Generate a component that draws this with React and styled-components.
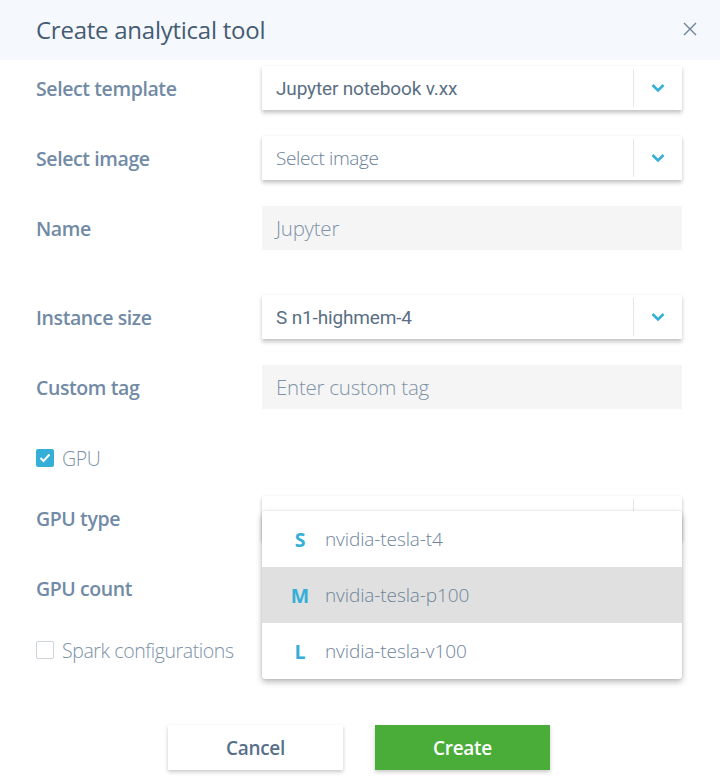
import styled, { createGlobalStyle } from 'styled-components';

const GlobalStyle = createGlobalStyle`
  body {
    margin: 0;
    background: #fff;
    font-family: 'Open Sans', sans-serif;
  }
`;

const Dialog = styled.div`
  width: 720px;
  height: 782px;
  background: #fff;
  overflow: hidden;
`;

const Header = styled.div`
  height: 60px;
  background: #f5f8fc;
  display: flex;
  align-items: center;
  justify-content: space-between;
  padding: 0 20px 2px 36px;
  box-sizing: border-box;
`;

const Title = styled.h2`
  margin: 0;
  font-size: 24px;
  font-weight: 400;
  color: #455c73;
  letter-spacing: -0.25px;
`;

const CloseButton = styled.button`
  border: none;
  background: none;
  padding: 0;
  width: 20px;
  height: 20px;
  display: flex;
  align-items: center;
  justify-content: center;
  cursor: pointer;
`;

const Body = styled.div`
  padding: 6px 38px 0 36px;
`;

const Row = styled.div`
  position: relative;
  display: flex;
  align-items: center;
  height: 44px;
  margin-bottom: ${({ $gap }) => $gap ?? 26}px;
`;

const Label = styled.div`
  width: 226px;
  flex-shrink: 0;
  padding-top: 1px;
  font-size: 19.5px;
  font-weight: 600;
  color: #718aa5;
  letter-spacing: -0.4px;
`;

const SelectBox = styled.div`
  flex: 1;
  height: 44px;
  display: flex;
  align-items: stretch;
  background: #fff;
  box-shadow: 0 3px 4px rgba(0, 0, 0, 0.22), 0 0 2px rgba(0, 0, 0, 0.06);
`;

const SelectValue = styled.div`
  flex: 1;
  display: flex;
  align-items: center;
  padding-left: 14px;
  font-size: 19px;
  font-family: ${({ $placeholder }) =>
    $placeholder ? "'Open Sans', sans-serif" : "'Roboto', 'Liberation Sans', sans-serif"};
  font-weight: ${({ $placeholder }) => ($placeholder ? 300 : 400)};
  color: ${({ $placeholder }) => ($placeholder ? '#6a8199' : '#5a6f84')};
  letter-spacing: ${({ $placeholder }) => ($placeholder ? '-0.4px' : '-0.15px')};
`;

const Caret = styled.div`
  width: 48px;
  margin: 3px 0;
  border-left: 1px solid #e6e6e6;
  display: flex;
  align-items: center;
  justify-content: center;
`;

const TextInput = styled.div`
  flex: 1;
  height: 44px;
  background: #f5f5f5;
  display: flex;
  align-items: center;
  padding-left: 14px;
  font-size: 20.5px;
  font-weight: 300;
  color: #7e93a8;
  letter-spacing: -0.25px;
`;

const CheckRow = styled.label`
  display: flex;
  align-items: center;
  gap: 8px;
  height: 18px;
  margin-bottom: ${({ $gap }) => $gap}px;
  font-size: 19.5px;
  font-weight: 300;
  color: #7b91a7;
  letter-spacing: -0.4px;
`;

const Box = styled.span`
  width: 18px;
  height: 18px;
  flex-shrink: 0;
  box-sizing: border-box;
  border-radius: 2px;
  display: flex;
  align-items: center;
  justify-content: center;
  background: ${({ $checked }) => ($checked ? '#35afd8' : '#fff')};
  border: ${({ $checked }) => ($checked ? 'none' : '1.5px solid #cfd5db')};
`;

const Menu = styled.ul`
  position: absolute;
  left: 226px;
  right: 0;
  top: 15px;
  margin: 0;
  padding: 0;
  list-style: none;
  background: #fff;
  border-radius: 4px;
  overflow: hidden;
  box-shadow: 0 3px 6px rgba(0, 0, 0, 0.28), 0 0 3px rgba(0, 0, 0, 0.08);
  z-index: 10;
`;

const MenuItem = styled.li`
  height: 56px;
  display: flex;
  align-items: center;
  padding-left: 13px;
  background: ${({ $active }) => ($active ? '#e0e0e0' : '#fff')};
  font-size: 19px;
  font-weight: 300;
  color: #6e849b;
  letter-spacing: -0.1px;
`;

const Size = styled.span`
  width: 50px;
  text-align: center;
  font-weight: 700;
  font-size: 19.5px;
  letter-spacing: 0;
  color: #35afd8;
`;

const Footer = styled.div`
  display: flex;
  justify-content: center;
  gap: 32px;
  margin-top: 66px;
`;

const Button = styled.button`
  width: 175px;
  height: 45px;
  border: none;
  font-family: 'Open Sans', sans-serif;
  font-size: 19px;
  font-weight: 600;
  letter-spacing: -0.3px;
  cursor: pointer;
  background: ${({ $primary }) => ($primary ? '#4aad3a' : '#fff')};
  color: ${({ $primary }) => ($primary ? '#fff' : '#577089')};
  box-shadow: 0 2px 4px rgba(0, 0, 0, 0.22);
`;

const Chevron = () => (
  <svg width="14" height="10" viewBox="0 0 14 10">
    <path d="M1.5 2 L7 7.5 L12.5 2" fill="none" stroke="#35afd8" strokeWidth="2.6" />
  </svg>
);

const Select = ({ value, placeholder }) => (
  <SelectBox>
    <SelectValue $placeholder={!value}>{value || placeholder}</SelectValue>
    <Caret>
      <Chevron />
    </Caret>
  </SelectBox>
);

const gpuTypes = [
  { size: 'S', name: 'nvidia-tesla-t4' },
  { size: 'M', name: 'nvidia-tesla-p100', active: true },
  { size: 'L', name: 'nvidia-tesla-v100' },
];

export default function App() {
  return (
    <>
      <GlobalStyle />
      <Dialog>
        <Header>
          <Title>Create analytical tool</Title>
          <CloseButton aria-label="Close">
            <svg width="14" height="14" viewBox="0 0 14 14">
              <path d="M1 1 L13 13 M13 1 L1 13" stroke="#6f8296" strokeWidth="1.4" />
            </svg>
          </CloseButton>
        </Header>
        <Body>
          <Row>
            <Label>Select template</Label>
            <Select value="Jupyter notebook v.xx" />
          </Row>
          <Row>
            <Label>Select image</Label>
            <Select placeholder="Select image" />
          </Row>
          <Row $gap={45}>
            <Label>Name</Label>
            <TextInput>Jupyter</TextInput>
          </Row>
          <Row>
            <Label>Instance size</Label>
            <Select value="S n1-highmem-4" />
          </Row>
          <Row $gap={40}>
            <Label>Custom tag</Label>
            <TextInput>Enter custom tag</TextInput>
          </Row>
          <CheckRow $gap={29}>
            <Box $checked>
              <svg width="12" height="10" viewBox="0 0 12 10">
                <path d="M1.5 5 L4.5 8 L10.5 1.5" fill="none" stroke="#fff" strokeWidth="2" />
              </svg>
            </Box>
            GPU
          </CheckRow>
          <Row>
            <Label>GPU type</Label>
            <SelectBox>
              <SelectValue />
              <Caret />
            </SelectBox>
            <Menu>
              {gpuTypes.map((g) => (
                <MenuItem key={g.name} $active={g.active}>
                  <Size>{g.size}</Size>
                  {g.name}
                </MenuItem>
              ))}
            </Menu>
          </Row>
          <Row $gap={31}>
            <Label>GPU count</Label>
          </Row>
          <CheckRow $gap={0}>
            <Box />
            Spark configurations
          </CheckRow>
          <Footer>
            <Button>Cancel</Button>
            <Button $primary>Create</Button>
          </Footer>
        </Body>
      </Dialog>
    </>
  );
}
